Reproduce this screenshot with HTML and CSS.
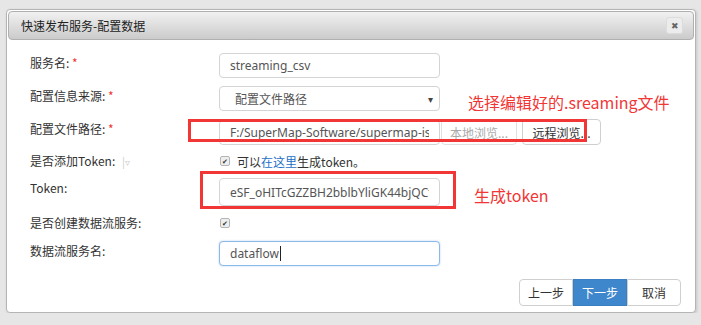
FILE: index.html
```html
<!DOCTYPE html>
<html lang="zh-CN">
<head>
    <meta charset="UTF-8">
    <meta name="viewport" content="width=device-width, initial-scale=1.0">
    <title>快速发布服务-配置数据</title>
    <link rel="stylesheet" href="styles.css">
</head>
<body>
    <div class="dialog">
        <div class="titlebar">
            <span class="title">快速发布服务-配置数据</span>
            <span class="close">✖</span>
        </div>

        <div class="content">
            <div class="row row-1">
                <label>服务名: <em>*</em></label>
                <div class="field"><input type="text" class="text" value="streaming_csv"></div>
            </div>
            <div class="row row-2">
                <label>配置信息来源: <em>*</em></label>
                <div class="field">
                    <div class="select">配置文件路径<span class="arrow">▾</span></div>
                </div>
            </div>
            <div class="row row-3">
                <label>配置文件路径: <em>*</em></label>
                <div class="field">
                    <input type="text" class="text" value="F:/SuperMap-Software/supermap-iserver">
                    <button class="btn btn-disabled">本地浏览...</button>
                    <button class="btn btn-remote">远程浏览...</button>
                </div>
            </div>
            <div class="row row-4">
                <label>是否添加Token: <span class="toggle">|<b>▿</b></span></label>
                <div class="field">
                    <span class="check">✔</span>
                    <span class="hint">可以<a href="#">在这里</a>生成token。</span>
                </div>
            </div>
            <div class="row row-5">
                <label>Token:</label>
                <div class="field"><input type="text" class="text token" value="eSF_oHITcGZZBH2bblbYliGK44bjQCtL"></div>
            </div>
            <div class="row row-6">
                <label>是否创建数据流服务:</label>
                <div class="field"><span class="check">✔</span></div>
            </div>
            <div class="row row-7">
                <label>数据流服务名:</label>
                <div class="field"><input type="text" class="text focus" value="dataflow"><span class="caret"></span></div>
            </div>
        </div>

        <div class="footer">
            <button class="btn">上一步</button>
            <button class="btn btn-primary">下一步</button>
            <button class="btn">取消</button>
        </div>

        <!-- red marks drawn on the screenshot -->
        <div class="mark mark-path"></div>
        <div class="mark mark-token"></div>
        <div class="note note-path">选择编辑好的.sreaming文件</div>
        <div class="note note-token">生成token</div>
    </div>
</body>
</html>
```

FILE: styles.css
```css
body {
    margin: 0;
    padding: 9px 0 0 6px;
    background-color: #e6e6e6;
    font-family: "Noto Sans", "Noto Sans CJK SC", sans-serif;
    font-size: 12px;
    color: #333;
}

.dialog {
    position: relative;
    width: 686px;
    height: 300px;
    padding: 1px;
    background-color: #fff;
    border: 1px solid #b5b5b5;
    border-radius: 4px;
    box-shadow: 1px 1px 3px rgba(0, 0, 0, 0.15);
}

.titlebar {
    display: flex;
    align-items: center;
    justify-content: space-between;
    height: 27px;
    padding: 0 10px 0 12px;
    border: 1px solid #b0b0b0;
    border-radius: 4px;
    background: linear-gradient(#f1f1f1, #cbcbcb);
}

.title {
    font-family: "Noto Sans CJK SC", sans-serif;
    font-size: 12px;
    color: #222;
}

.close {
    display: flex;
    align-items: center;
    justify-content: center;
    width: 15px;
    height: 15px;
    border-radius: 3px;
    background-color: #ececec;
    border: 1px solid #dcdcdc;
    color: #666;
    font-size: 9px;
}

.content {
    padding: 13px 0 0 22px;
}

.row {
    display: grid;
    grid-template-columns: 189px auto;
    align-items: start;
}

.row label {
    line-height: 20px;
    font-family: "Noto Sans CJK SC", sans-serif;
    color: #333;
}

.row label em {
    font-style: normal;
    color: #e33;
}

.row-1 { height: 33px; }
.row-2 { height: 33px; }
.row-3 { height: 32px; }
.row-4 { height: 27px; }
.row-5 { height: 35px; }
.row-6 { height: 28px; }
.row-7 { height: 26px; }

.field {
    display: flex;
    align-items: center;
    position: relative;
}

.row-4 .field,
.row-6 .field {
    height: 20px;
}

.text {
    box-sizing: border-box;
    width: 221px;
    height: 25px;
    padding: 0 10px;
    border: 1px solid #d4d4d4;
    border-radius: 4px;
    font-family: "Noto Sans", "Noto Sans CJK SC", sans-serif;
    font-size: 12px;
    color: #555;
    outline: none;
}

.text.token {
    height: 28px;
}

.text.focus {
    border-color: #8db8ea;
    box-shadow: 0 0 2px rgba(102, 160, 230, 0.5);
}

.caret {
    position: absolute;
    left: 61px;
    top: 5px;
    width: 1px;
    height: 15px;
    background-color: #222;
}

.select {
    box-sizing: border-box;
    display: flex;
    align-items: center;
    justify-content: space-between;
    width: 221px;
    height: 25px;
    padding: 0 6px 0 15px;
    border: 1px solid #d4d4d4;
    border-radius: 4px;
    font-family: "Noto Sans CJK SC", sans-serif;
    color: #555;
}

.arrow {
    font-size: 10px;
    color: #444;
}

.btn {
    box-sizing: border-box;
    height: 27px;
    padding: 0 10px;
    border: 1px solid #cfcfcf;
    border-radius: 4px;
    background-color: #fff;
    font-family: "Noto Sans CJK SC", sans-serif;
    font-size: 12px;
    color: #333;
    white-space: nowrap;
}

.row-3 .btn {
    height: 26px;
    padding: 0 4px;
    margin-left: 1px;
    overflow: hidden;
}

.btn-disabled {
    width: 76px;
    color: #aaa;
    border-color: #e0e0e0;
}

.row-3 .btn-remote {
    width: 79px;
    margin-left: 5px;
}

.toggle {
    margin-left: 4px;
    color: #ccc;
    font-size: 11px;
}

.toggle b {
    font-weight: normal;
    font-size: 10px;
}

.check {
    display: inline-flex;
    align-items: center;
    justify-content: center;
    box-sizing: border-box;
    width: 10px;
    height: 10px;
    margin-left: 1px;
    border: 1px solid #b4b4b4;
    border-radius: 2px;
    background-color: #eee;
    color: #333;
    font-size: 7px;
}

.hint {
    margin-left: 7px;
    font-family: "Noto Sans CJK SC", sans-serif;
    color: #333;
}

.hint a {
    color: #1c6fc7;
    text-decoration: none;
}

.footer {
    display: flex;
    justify-content: flex-end;
    padding: 12px 13px 0 0;
}

.footer .btn {
    width: 54px;
    padding: 0;
    border-radius: 0;
}

.footer .btn:first-child {
    border-radius: 4px 0 0 4px;
}

.footer .btn:last-child {
    border-radius: 0 4px 4px 0;
}

.btn-primary {
    background-color: #3f87cc;
    border-color: #3a7fc1;
    color: #fff;
}

.mark {
    position: absolute;
    border: 3px solid #f23636;
}

.mark-path {
    left: 181px;
    top: 109px;
    width: 393px;
    height: 17px;
}

.mark-token {
    left: 193px;
    top: 161px;
    width: 250px;
    height: 32px;
}

.note {
    position: absolute;
    font-family: "Noto Sans CJK SC", sans-serif;
    font-size: 16px;
    color: #f23636;
    white-space: nowrap;
}

.note-path {
    left: 461px;
    top: 80px;
}

.note-token {
    left: 467px;
    top: 173px;
}
```
